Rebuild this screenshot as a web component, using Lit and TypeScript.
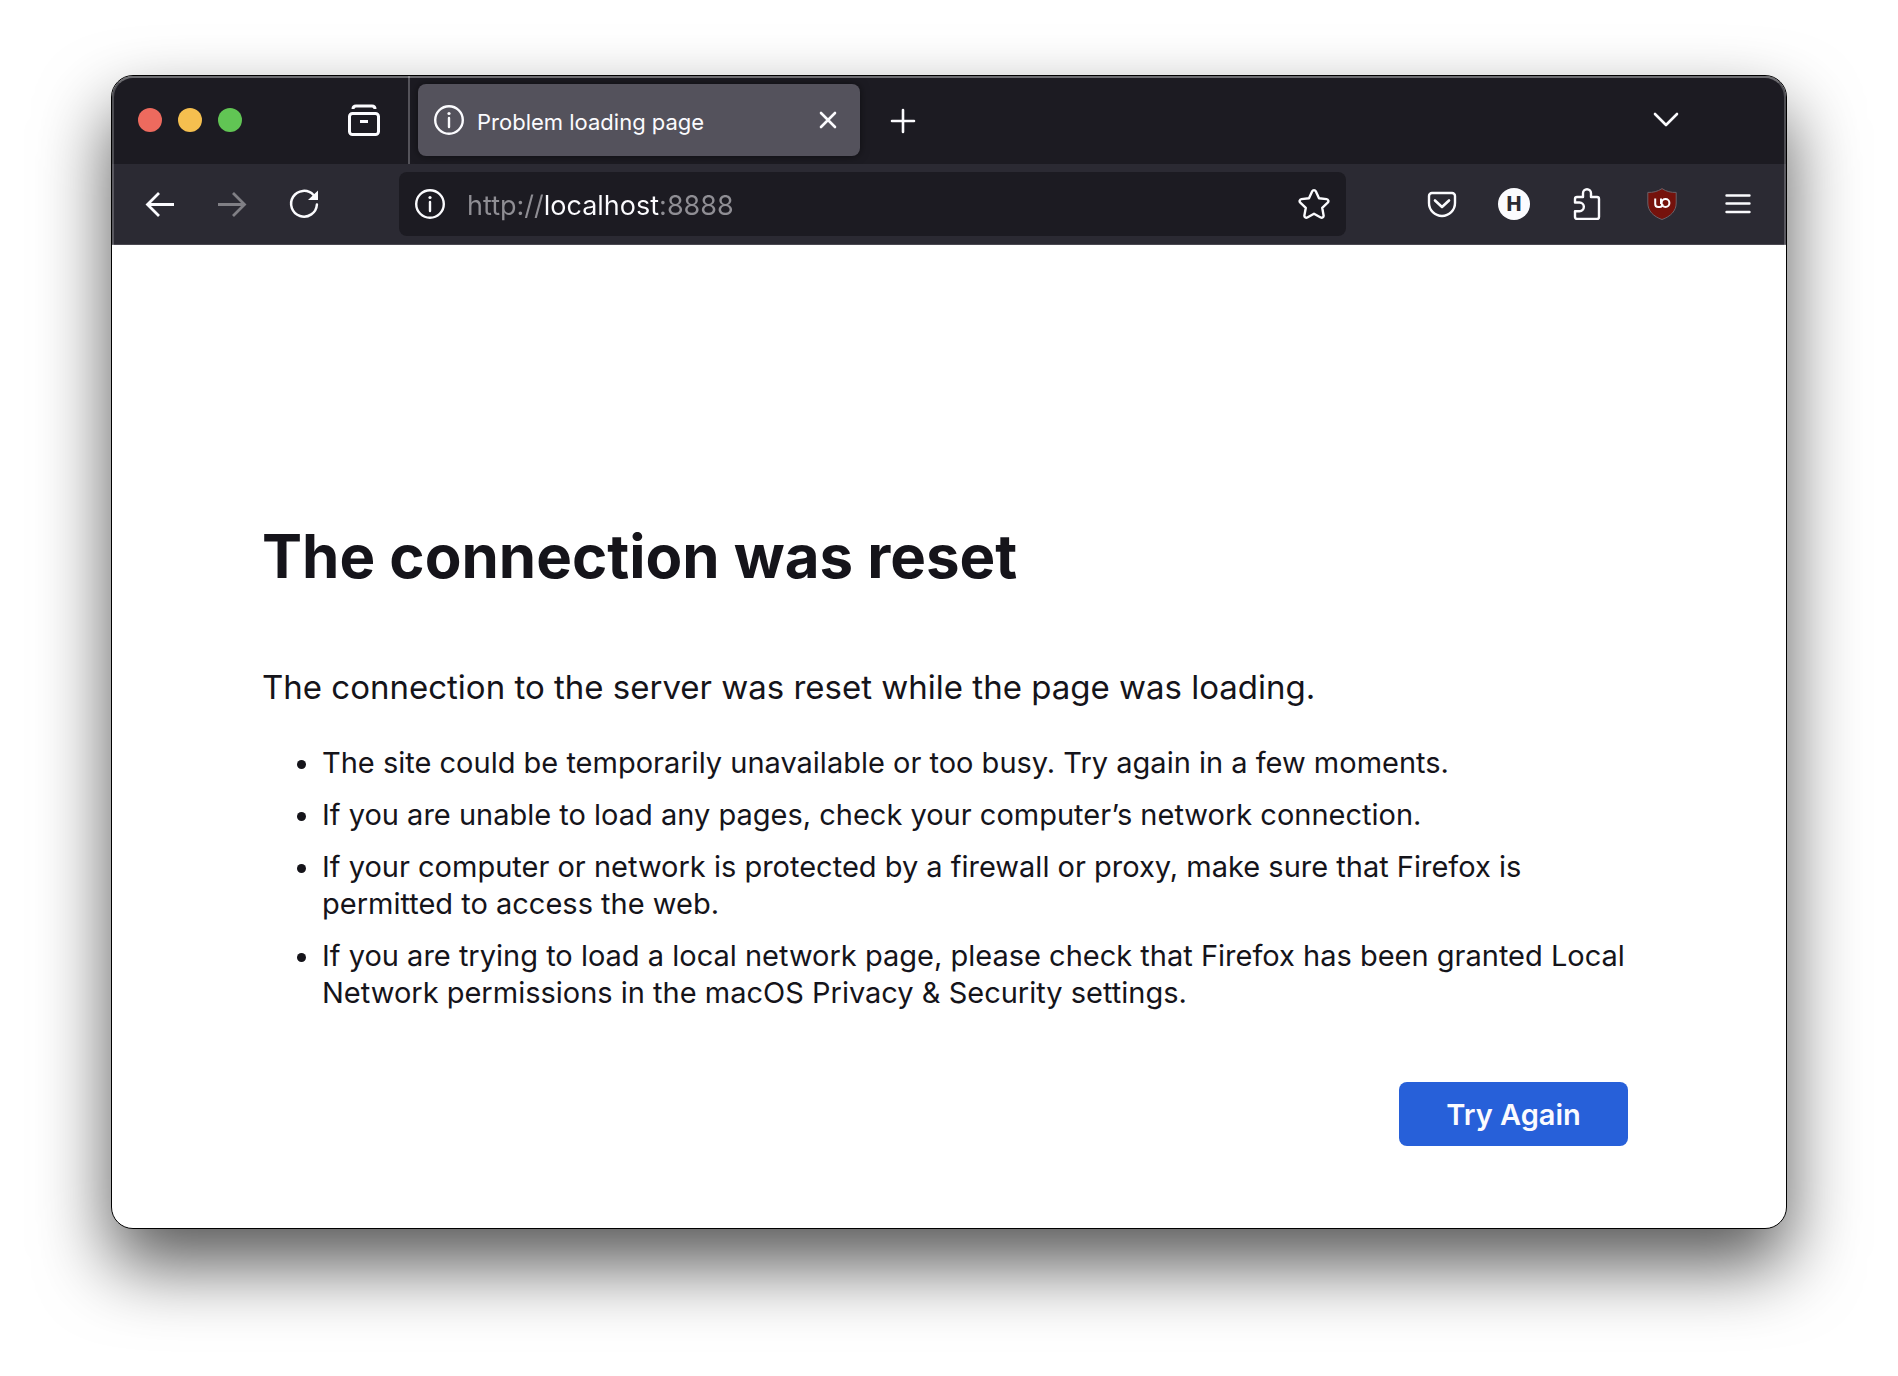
import { LitElement, html, css, svg } from "lit";
import { customElement, property } from "lit/decorators.js";

const icons: Record<string, unknown> = {
  view: svg`<path d="M5 5Q5 2 8 2H24Q27 2 27 5" stroke-width="3"/><rect x="1.5" y="9.5" width="29" height="21" rx="3" stroke-width="3"/><path d="M12 17.5h8" stroke-width="3"/>`,
  info: svg`<circle cx="16" cy="16" r="13.8" stroke-width="2.4"/><path d="M16 14v9" stroke-width="2.4" stroke-linecap="round"/><circle cx="16" cy="9.5" r="1.6" fill="currentColor" stroke="none"/>`,
  close: svg`<path d="M9 9l14 14M23 9L9 23" stroke-width="2.6" stroke-linecap="round"/>`,
  plus: svg`<path d="M16 6v22M5 17h22" stroke-width="2.600" stroke-linecap="round"/>`,
  chevron: svg`<path d="M5 10l11 11 11-11" stroke-width="2.600" stroke-linecap="round" stroke-linejoin="round"/>`,
  back: svg`<path d="M30 16.500H3.500M15 5L3.500 16.500 15 28" stroke-width="2.800"/>`,
  forward: svg`<path d="M2 16.500h26.500M17 5l11.500 11.500L17 28" stroke-width="2.800"/>`,
  reload: svg`<path d="M28.900 16.500A12.900 12.900 0 1 1 25.500 7" stroke-width="2.500" stroke-linecap="round"/><path d="M30 2.500V12H20z" fill="currentColor" stroke="none"/>`,
  star: svg`<path d="M14.200 3.300a2 2 0 0 1 3.600 0l3.200 6.900 7.600.9a2 2 0 0 1 1.100 3.500l-5.500 5.200 1.400 7.600a2 2 0 0 1-2.900 2.100L16 25.800l-6.700 3.700a2 2 0 0 1-2.900-2.100l1.400-7.600-5.500-5.200a2 2 0 0 1 1.100-3.500l7.600-.9z" stroke-width="2.400" stroke-linejoin="round"/>`,
  pocket: svg`<path d="M6 5H26a3 3 0 0 1 3 3V15a13 13 0 0 1-26 0V8a3 3 0 0 1 3-3z" stroke-width="2.400"/><path d="M9 12.500l7 6.500 7-6.500" stroke-width="2.600" stroke-linecap="round" stroke-linejoin="round"/>`,
  puzzle: svg`<path d="M5 14.500V11a2 2 0 0 1 2-2H13V5.200a4 4 0 0 1 8 0V9H27a2 2 0 0 1 2 2V29a2 2 0 0 1-2 2H7a2 2 0 0 1-2-2V23.200H9.500a4.300 4.300 0 0 0 0-8.700z" stroke-width="2.400" stroke-linejoin="round"/>`,
  shield: svg`<path d="M16 .6C20.500 3.600 25 4.600 30.200 4.400V15C30.200 23 24.500 28.500 16 31.500 7.500 28.500 1.800 23 1.800 15V4.400C7 4.600 11.500 3.600 16 .6z" fill="#75120c" stroke="#6a6269" stroke-width="1"/><path d="M9.200 10.500v5.500a3 3 0 0 0 3 3h1.300a3 3 0 0 0 3-3" stroke-width="2"/><path d="M15 10.500v5.500" stroke-width="2"/><circle cx="19.500" cy="15" r="3.900" stroke-width="2"/>`,
  menu: svg`<path d="M4.500 7.500h23M4.500 15.500h23M4.500 24h23" stroke-width="2.400" stroke-linecap="round"/>`,
};

@customElement("ui-icon")
export class UiIcon extends LitElement {
  @property() name = "";

  static styles = css`
    :host {
      display: block;
      flex: none;
      width: 32px;
      height: 32px;
    }
    .glyph {
      display: block;
      width: 100%;
      height: 100%;
      fill: none;
      stroke: currentColor;
    }
  `;

  render() {
    return html`<svg class="glyph" viewBox="0 0 32 32" aria-hidden="true">${icons[this.name]}</svg>`;
  }
}

@customElement("app-root")
export class AppRoot extends LitElement {
  private tips = [
    "The site could be temporarily unavailable or too busy. Try again in a few moments.",
    "If you are unable to load any pages, check your computer’s network connection.",
    "If your computer or network is protected by a firewall or proxy, make sure that Firefox is permitted to access the web.",
    "If you are trying to load a local network page, please check that Firefox has been granted Local Network permissions in the macOS Privacy & Security settings.",
  ];

  static styles = css`
    :host {
      display: flex;
      box-sizing: border-box;
      min-height: 100vh;
      padding: 75px 111px 147px;
      background: #fff;
      color: #15141a;
      font-family: Inter, "Liberation Sans", sans-serif;
    }
    button {
      font: inherit;
      color: inherit;
      border: 0;
      padding: 0;
      background: none;
      cursor: pointer;
    }
    .window {
      position: relative;
      flex: 1;
      min-width: 0;
      display: flex;
      flex-direction: column;
      border: 1px solid #000;
      border-radius: 22px;
      background: #fff;
      overflow: hidden;
      box-shadow: 0 36px 72px rgba(0, 0, 0, 0.66);
    }
    .window::after {
      content: "";
      position: absolute;
      inset: 0;
      border: 2px solid rgba(255, 255, 255, 0.22);
      border-top-color: rgba(255, 255, 255, 0.36);
      border-radius: 21px;
      pointer-events: none;
    }
    .tabs {
      display: flex;
      align-items: center;
      height: 88px;
      padding: 0 88px 0 26px;
      background: #1c1b22;
      color: #fbfbfe;
    }
    .lights {
      display: flex;
      gap: 16px;
      margin-right: 90px;
    }
    .light {
      width: 24px;
      height: 24px;
      border-radius: 50%;
    }
    .red {
      background: #ed6a5e;
    }
    .yellow {
      background: #f5bf4f;
    }
    .green {
      background: #61c554;
    }
    .tool {
      flex: none;
      display: flex;
      align-items: center;
      justify-content: center;
      width: 64px;
      height: 64px;
      border-radius: 8px;
    }
    .tool:disabled {
      color: #807f85;
    }
    .divider {
      align-self: stretch;
      width: 2px;
      margin: 0 8px 0 12px;
      background: #55545b;
    }
    .tab {
      display: flex;
      align-items: center;
      box-sizing: border-box;
      flex: 0 1 442px;
      height: 72px;
      margin-right: 11px;
      padding: 0 16px 0 15px;
      border-radius: 8px;
      background: #54525c;
      box-shadow: 0 0 8px rgba(0, 0, 0, 0.5);
      font-size: 22px;
      line-height: 28px;
    }
    .title {
      flex: 1;
      padding: 4px 0 0 12px;
      white-space: nowrap;
    }
    .list-tabs {
      margin-left: auto;
    }
    .toolbar {
      display: flex;
      align-items: center;
      height: 80px;
      padding: 0 16px;
      border-bottom: 1px solid #4a4851;
      background: #2b2a33;
      color: #fbfbfe;
    }
    .group {
      display: flex;
      gap: 8px;
    }
    .group.end {
      gap: 12px;
      margin-left: 12px;
    }
    .address {
      flex: 1;
      min-width: 0;
      display: flex;
      align-items: center;
      height: 64px;
      margin: 0 64px 0 63px;
      padding-left: 15px;
      border-radius: 8px;
      background: #1c1b22;
    }
    .url {
      flex: 1;
      min-width: 0;
      height: 40px;
      margin-left: 21px;
      padding: 2px 0 0;
      border: 0;
      outline: 0;
      font: inherit;
      font-size: 27px;
      color: transparent;
      background: linear-gradient(90deg, #8f8e94 77px, #fbfbfe 77px, #fbfbfe 192px, #8f8e94 192px);
      background-clip: text;
      -webkit-background-clip: text;
    }
    .badge {
      width: 32px;
      height: 32px;
      border-radius: 50%;
      background: #fbfbfe;
      color: #2b2a33;
      font-size: 20px;
      font-weight: 800;
      line-height: 32px;
      text-align: center;
    }
    .page {
      flex: 1;
      padding: 271px 158px 82px 150px;
      font-size: 29px;
      line-height: 37px;
    }
    .heading {
      margin: 0 0 71px;
      font-size: 60px;
      font-weight: 700;
      line-height: 80px;
    }
    .lead {
      margin: 0 0 37px;
      font-size: 33px;
      line-height: 40px;
    }
    .tips {
      display: flex;
      flex-direction: column;
      gap: 15px;
      margin: 0 0 71px;
      padding-left: 60px;
    }
    .actions {
      display: flex;
      justify-content: flex-end;
    }
    .retry {
      min-width: 229px;
      height: 64px;
      padding: 0 40px;
      border-radius: 8px;
      background: #2760d9;
      color: #fbfbfe;
      font-size: 29px;
      font-weight: 600;
    }
  `;

  render() {
    return html`
      <div class="window">
        <header class="tabs">
          <div class="lights">
            <button class="light red" aria-label="Close window"></button>
            <button class="light yellow" aria-label="Minimize window"></button>
            <button class="light green" aria-label="Zoom window"></button>
          </div>
          <button class="tool" aria-label="Firefox View"><ui-icon name="view"></ui-icon></button>
          <div class="divider"></div>
          <div class="tab">
            <ui-icon name="info"></ui-icon>
            <span class="title">Problem loading page</span>
            <button aria-label="Close tab"><ui-icon name="close"></ui-icon></button>
          </div>
          <button class="tool" aria-label="New tab"><ui-icon name="plus"></ui-icon></button>
          <button class="tool list-tabs" aria-label="List all tabs"><ui-icon name="chevron"></ui-icon></button>
        </header>
        <nav class="toolbar" aria-label="Navigation">
          <div class="group">
            <button class="tool" aria-label="Back"><ui-icon name="back"></ui-icon></button>
            <button class="tool" aria-label="Forward" disabled><ui-icon name="forward"></ui-icon></button>
            <button class="tool" aria-label="Reload"><ui-icon name="reload"></ui-icon></button>
          </div>
          <div class="address">
            <button aria-label="Site information"><ui-icon name="info"></ui-icon></button>
            <input class="url" type="text" aria-label="Address" spellcheck="false" .value=${"http://localhost:8888"} />
            <button class="tool" aria-label="Bookmark this page"><ui-icon name="star"></ui-icon></button>
          </div>
          <div class="group">
            <button class="tool" aria-label="Save to Pocket"><ui-icon name="pocket"></ui-icon></button>
            <button class="tool" aria-label="Extension H"><span class="badge">H</span></button>
            <button class="tool" aria-label="Extensions"><ui-icon name="puzzle"></ui-icon></button>
          </div>
          <div class="group end">
            <button class="tool" aria-label="uBlock Origin"><ui-icon name="shield"></ui-icon></button>
            <button class="tool" aria-label="Application menu"><ui-icon name="menu"></ui-icon></button>
          </div>
        </nav>
        <main class="page">
          <h1 class="heading">The connection was reset</h1>
          <p class="lead">The connection to the server was reset while the page was loading.</p>
          <ul class="tips">
            ${this.tips.map((tip) => html`<li>${tip}</li>`)}
          </ul>
          <div class="actions"><button class="retry">Try Again</button></div>
        </main>
      </div>
    `;
  }
}
